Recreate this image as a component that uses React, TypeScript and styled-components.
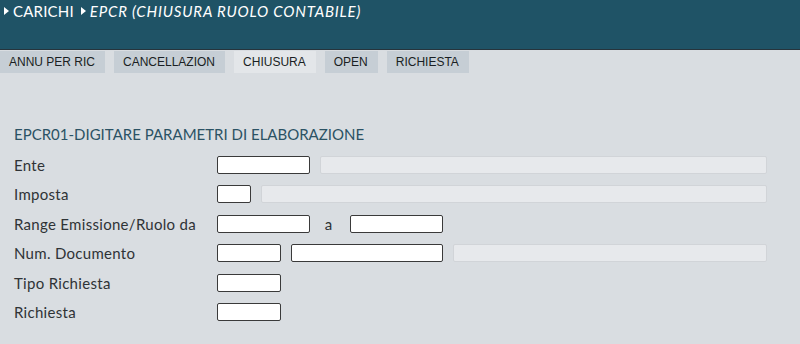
import React from "react";
import styled, { createGlobalStyle } from "styled-components";

const Global = createGlobalStyle`
  html, body { margin: 0; padding: 0; background: #d9dde1; }
  body { font-family: "Lato", "Open Sans", sans-serif; }
  * { box-sizing: border-box; }
`;

const Page = styled.div`
  width: 800px;
  height: 344px;
  background: #d9dde1;
  overflow: hidden;
`;

const Header = styled.header`
  height: 50px;
  background: #1f5366;
  border-bottom: 1px solid #26343c;
  display: flex;
  align-items: flex-start;
  padding: 2px 0 0 4px;
  gap: 7px;
`;

const Crumb = styled.span<{ $last?: boolean }>`
  display: flex;
  align-items: center;
  gap: 4px;
  color: #ffffff;
  font-size: 15px;
  line-height: 18px;
  font-style: ${(p) => (p.$last ? "italic" : "normal")};
  letter-spacing: ${(p) => (p.$last ? "0.8px" : "0.2px")};
`;

const Arrow = styled.span`
  width: 0;
  height: 0;
  border-top: 4px solid transparent;
  border-bottom: 4px solid transparent;
  border-left: 5px solid #ffffff;
`;

const TabBar = styled.nav`
  display: flex;
  gap: 9px;
  padding: 1px 0 0 0;
`;

const Tab = styled.div<{ $active?: boolean }>`
  height: 22px;
  padding: 0 10px 0 9px;
  display: flex;
  align-items: center;
  font-family: "Liberation Sans", Arial, sans-serif;
  font-size: 12px;
  color: #1a1f23;
  background: ${(p) => (p.$active ? "#e3e6e9" : "#c6ced5")};
`;

const Section = styled.section`
  padding: 52px 0 0 14px;
`;

const Title = styled.h2`
  margin: 0 0 13px 0;
  font-size: 15px;
  font-weight: 400;
  line-height: 18px;
  color: #2b5264;
`;

const Form = styled.div`
  display: grid;
  grid-template-columns: 203px 1fr;
  grid-auto-rows: 29.4px;
  width: 753px;
`;

const Label = styled.div`
  font-size: 15px;
  letter-spacing: 0.3px;
  color: #2f3336;
  display: flex;
  align-items: center;
  height: 18px;
`;

const Fields = styled.div`
  display: flex;
  align-items: flex-start;
  gap: 10px;
`;

const Input = styled.div<{ $w: number }>`
  width: ${(p) => p.$w}px;
  height: 18px;
  background: #ffffff;
  border: 1px solid #3a3a3a;
  border-radius: 2px;
  flex: none;
`;

const Disabled = styled.div`
  flex: 1;
  height: 18px;
  background: #e7e9ec;
  border: 1px solid #d1d4d8;
  border-radius: 2px;
`;

const Joiner = styled.span`
  font-size: 15px;
  color: #2f3336;
  line-height: 18px;
  width: 23px;
  text-align: center;
  margin-left: -3px;
`;

const tabs = ["ANNU PER RIC", "CANCELLAZION", "CHIUSURA", "OPEN", "RICHIESTA"];

export default function App() {
  return (
    <Page>
      <Global />
      <Header>
        <Crumb>
          <Arrow />
          CARICHI
        </Crumb>
        <Crumb $last>
          <Arrow />
          EPCR (CHIUSURA RUOLO CONTABILE)
        </Crumb>
      </Header>
      <TabBar>
        {tabs.map((t) => (
          <Tab key={t} $active={t === "CHIUSURA"}>
            {t}
          </Tab>
        ))}
      </TabBar>
      <Section>
        <Title>EPCR01-DIGITARE PARAMETRI DI ELABORAZIONE</Title>
        <Form>
          <Label>Ente</Label>
          <Fields>
            <Input $w={93} />
            <Disabled />
          </Fields>
          <Label>Imposta</Label>
          <Fields>
            <Input $w={34} />
            <Disabled />
          </Fields>
          <Label>Range Emissione/Ruolo da</Label>
          <Fields>
            <Input $w={93} />
            <Joiner>a</Joiner>
            <Input $w={93} />
          </Fields>
          <Label>Num. Documento</Label>
          <Fields>
            <Input $w={64} />
            <Input $w={152} />
            <Disabled />
          </Fields>
          <Label>Tipo Richiesta</Label>
          <Fields>
            <Input $w={64} />
          </Fields>
          <Label>Richiesta</Label>
          <Fields>
            <Input $w={64} />
          </Fields>
        </Form>
      </Section>
    </Page>
  );
}
